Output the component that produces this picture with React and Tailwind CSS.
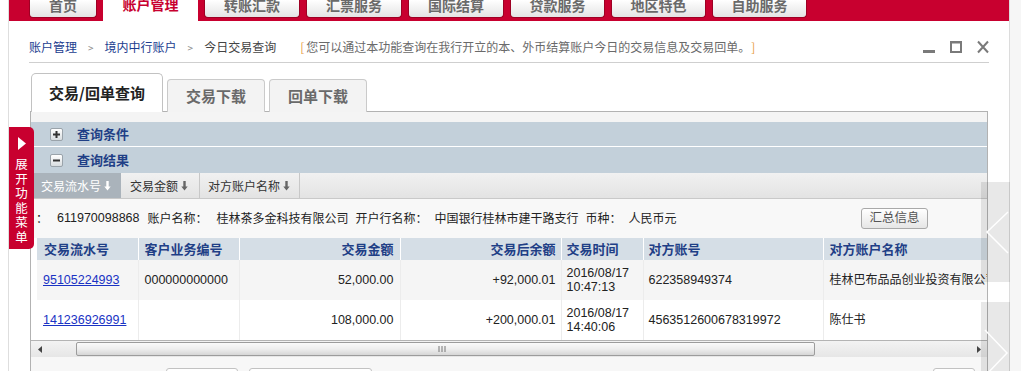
import React from "react";

const navTabs = [
  { label: "首页", w: "w-[68px]" },
  { label: "账户管理", w: "w-[95px]", active: true },
  { label: "转账汇款", w: "w-[96px]" },
  { label: "汇票服务", w: "w-[96px]" },
  { label: "国际结算", w: "w-[96px]" },
  { label: "贷款服务", w: "w-[95px]" },
  { label: "地区特色", w: "w-[95px]" },
  { label: "自助服务", w: "w-[95px]" },
];

const rows = [
  {
    id: "95105224993",
    biz: "000000000000",
    amount: "52,000.00",
    balance: "+92,000.01",
    date: "2016/08/17",
    time: "10:47:13",
    acct: "622358949374",
    name: "桂林巴布品品创业投资有限公司",
  },
  {
    id: "141236926991",
    biz: "",
    amount: "108,000.00",
    balance: "+200,000.01",
    date: "2016/08/17",
    time: "14:40:06",
    acct: "4563512600678319972",
    name: "陈仕书",
  },
];

const SortArrow = () => (
  <svg width="7" height="10" viewBox="0 0 7 10" className="ml-[3px]">
    <path d="M2.3 0h2.4v5.5h2L3.5 9.5 0.3 5.5h2z" fill="currentColor" />
  </svg>
);

const ToggleBox = ({ plus }) => (
  <div className="w-[13px] h-[13px] rounded-[2px] border border-[#9aa3aa] bg-linear-to-b from-white to-[#d8dde0] flex items-center justify-center">
    <svg width="9" height="9" viewBox="0 0 9 9">
      <rect x="1" y="3.5" width="7" height="2" fill="#333" />
      {plus && <rect x="3.5" y="1" width="2" height="7" fill="#333" />}
    </svg>
  </div>
);

const App = () => {
  return (
    <div className="relative w-[1021px] h-[371px] overflow-hidden bg-white flex font-['Liberation_Sans','Noto_Sans_CJK_SC',sans-serif]">
      <div className="w-[9px] shrink-0 border-r border-[#dedede]" />

      <div className="w-[1000px] shrink-0 flex flex-col">
        {/* top navigation */}
        <div className="h-[21px] bg-[#c8002f] flex items-start pl-[20px] gap-[6px]">
          {navTabs.map((t) =>
            t.active ? (
              <div
                key={t.label}
                className={`${t.w} h-[21px] bg-white flex justify-center text-[14px] leading-[14px] font-bold text-[#c8002f] font-['Noto_Sans_CJK_SC',sans-serif]`}
              >
                <span className="-mt-[3px]">{t.label}</span>
              </div>
            ) : (
              <div
                key={t.label}
                className={`${t.w} h-[18px] rounded-b-[4px] border border-t-0 border-[#9e0024] bg-linear-to-b from-white to-[#e4e4e4] flex justify-center text-[14px] leading-[14px] font-bold text-[#6a6a6a] font-['Noto_Sans_CJK_SC',sans-serif]`}
              >
                <span className="-mt-[2px]">{t.label}</span>
              </div>
            )
          )}
        </div>

        <div className="flex-1 px-[20px] flex flex-col">
          {/* breadcrumb */}
          <div className="mt-[16px] pb-[5px] border-b border-[#cfcfcf]">
            <div className="h-[20px] flex items-center text-[12px] font-['Noto_Sans_CJK_SC',sans-serif]">
              <span className="text-[#1b3d8f]">账户管理</span>
              <span className="mx-[11px] text-[#888] text-[10px]">&gt;</span>
              <span className="text-[#1b3d8f]">境内中行账户</span>
              <span className="mx-[11px] text-[#888] text-[10px]">&gt;</span>
              <span className="text-[#444]">今日交易查询</span>
              <span className="ml-[24px] text-[#e8a048]">[</span>
              <span className="ml-[2px] text-[#6a6a6a]">
                您可以通过本功能查询在我行开立的本、外币结算账户今日的交易信息及交易回单。
              </span>
              <span className="ml-[1px] text-[#e8a048]">]</span>
              <div className="ml-auto flex items-center">
                <svg width="12" height="14" viewBox="0 0 12 14">
                  <rect x="0" y="10" width="12" height="3" fill="#7a7a7a" />
                </svg>
                <svg width="12" height="14" viewBox="0 0 12 14" className="ml-[15px]">
                  <rect x="1" y="2" width="10" height="10" fill="none" stroke="#7a7a7a" strokeWidth="2" />
                  <rect x="0" y="1" width="12" height="2.5" fill="#7a7a7a" />
                </svg>
                <svg width="12" height="14" viewBox="0 0 12 14" className="ml-[15px]">
                  <path d="M1 1.5l10 11M11 1.5l-10 11" stroke="#7a7a7a" strokeWidth="2" />
                </svg>
              </div>
            </div>
          </div>

          {/* sub tabs */}
          <div className="relative z-10 mt-[10px] h-[39px] flex items-end gap-[4px] pl-[2px] font-['Noto_Sans_CJK_SC',sans-serif]">
            <div className="w-[132px] h-[39px] bg-white border border-b-0 border-[#c2c2c2] rounded-t-[5px] flex items-center justify-center text-[15px] font-bold text-[#222]">
              交易/回单查询
            </div>
            <div className="w-[98px] h-[33px] bg-[#f3f3f3] border border-b-0 border-[#cacaca] rounded-t-[4px] flex items-center justify-center text-[15px] font-bold text-[#6a6a6a]">
              交易下载
            </div>
            <div className="w-[98px] h-[33px] bg-[#f3f3f3] border border-b-0 border-[#cacaca] rounded-t-[4px] flex items-center justify-center text-[15px] font-bold text-[#6a6a6a]">
              回单下载
            </div>
          </div>

          {/* panel */}
          <div className="-mt-[1px] mx-[1px] flex-1 border border-b-0 border-[#b2b2b2] flex flex-col">
            <div className="h-[10px] bg-[#f4f4f4]" />
            <div className="h-[25px] bg-[#c3d0da] border-b border-white flex items-center pl-[19px]">
              <ToggleBox plus />
              <span className="ml-[14px] text-[13px] font-bold text-[#1f3f86] font-['Noto_Sans_CJK_SC',sans-serif]">查询条件</span>
            </div>
            <div className="h-[26px] bg-[#c3d0da] flex items-center pl-[19px]">
              <ToggleBox />
              <span className="ml-[14px] text-[13px] font-bold text-[#1f3f86] font-['Noto_Sans_CJK_SC',sans-serif]">查询结果</span>
            </div>

            {/* sort bar */}
            <div className="h-[26px] bg-linear-to-b from-[#f1f1f1] to-[#e3e3e3] border-b border-[#c9c9c9] flex items-stretch pl-[3px] text-[12px] font-['Noto_Sans_CJK_SC',sans-serif]">
              <div className="w-[87px] flex items-center pl-[7px] bg-[#aab3bb] text-white">
                交易流水号
                <SortArrow />
              </div>
              <div className="w-[79px] flex items-center pl-[9px] text-[#333] border-r border-[#c8c8c8]">
                交易金额
                <span className="text-[#666]"><SortArrow /></span>
              </div>
              <div className="w-[100px] flex items-center pl-[8px] text-[#333] border-r border-[#c8c8c8]">
                对方账户名称
                <span className="text-[#666]"><SortArrow /></span>
              </div>
            </div>

            {/* account info */}
            <div className="h-[39px] bg-[#f8f8f8] flex items-center pl-[5px] pr-[59px] text-[12px] text-[#222]">
              <span>：</span>
              <span className="ml-[9px] text-[12.5px]">611970098868</span>
              <span className="ml-[8px]">账户名称：</span>
              <span className="ml-[9px]">桂林茶多金科技有限公司</span>
              <span className="ml-[7px]">开户行名称：</span>
              <span className="ml-[7px]">中国银行桂林市建干路支行</span>
              <span className="ml-[7px]">币种：</span>
              <span className="ml-[7px]">人民币元</span>
              <button className="ml-auto w-[67px] h-[21px] rounded-[3px] border border-[#a9a9a9] bg-linear-to-b from-white to-[#e6e6e6] text-[12.5px] text-[#555]">
                汇总信息
              </button>
            </div>

            {/* table */}
            <div className="ml-[6px] overflow-hidden">
              <table className="table-fixed w-[986px] border-collapse">
                <colgroup>
                  <col className="w-[101px]" />
                  <col className="w-[101px]" />
                  <col className="w-[161px]" />
                  <col className="w-[161px]" />
                  <col className="w-[82px]" />
                  <col className="w-[180px]" />
                  <col className="w-[200px]" />
                </colgroup>
                <thead>
                  <tr className="h-[22px] bg-[#d5dee6] text-[13px] font-bold text-[#1f3f86] font-['Noto_Sans_CJK_SC',sans-serif]">
                    <th className="text-left pl-[7px] border-r border-white font-bold">交易流水号</th>
                    <th className="text-left pl-[6px] border-r border-white font-bold">客户业务编号</th>
                    <th className="text-right pr-[6px] border-r border-white font-bold">交易金额</th>
                    <th className="text-right pr-[5px] border-r border-white font-bold">交易后余额</th>
                    <th className="text-left pl-[5px] border-r border-white font-bold">交易时间</th>
                    <th className="text-left pl-[5px] border-r border-white font-bold">对方账号</th>
                    <th className="text-left pl-[6px] font-bold">对方账户名称</th>
                  </tr>
                </thead>
                <tbody>
                  {rows.map((r, i) => (
                    <tr
                      key={r.id}
                      className={`h-[40px] text-[12.5px] text-[#222] ${i === 0 ? "bg-[#f5f5f5]" : "bg-white"}`}
                    >
                      <td className="pl-[6px] border-r border-[#ececec]">
                        <span className="text-[#1a33c4] underline">{r.id}</span>
                      </td>
                      <td className="pl-[6px] border-r border-[#ececec]">{r.biz}</td>
                      <td className="text-right pr-[6px] border-r border-[#ececec]">{r.amount}</td>
                      <td className="text-right pr-[5px] border-r border-[#ececec]">{r.balance}</td>
                      <td className="pl-[5px] leading-[14px] border-r border-[#ececec]">
                        <div>{r.date}</div>
                        <div>{r.time}</div>
                      </td>
                      <td className="pl-[5px] border-r border-[#ececec]">{r.acct}</td>
                      <td className="pl-[6px] text-[12px] whitespace-nowrap overflow-hidden">{r.name}</td>
                    </tr>
                  ))}
                </tbody>
              </table>
            </div>

            {/* horizontal scrollbar */}
            <div className="h-[17px] border-t border-[#b4b4b4] bg-linear-to-b from-[#f3f3f3] to-[#e6e6e6] flex items-center">
              <svg width="4" height="7" viewBox="0 0 4 7" className="ml-[7px]">
                <path d="M4 0v7L0 3.5z" fill="#444" />
              </svg>
              <div className="ml-[34px] w-[739px] h-[14px] rounded-[2px] border border-[#9c9c9c] bg-linear-to-b from-[#fafafa] via-[#eeeeee] to-[#d6d6d6] flex items-center justify-center">
                <svg width="8" height="6" viewBox="0 0 8 6" className="-ml-[8px]">
                  <path d="M1 0v6M4 0v6M7 0v6" stroke="#777" strokeWidth="1" />
                </svg>
              </div>
              <svg width="4" height="7" viewBox="0 0 4 7" className="ml-auto mr-[6px]">
                <path d="M0 0v7L4 3.5z" fill="#444" />
              </svg>
            </div>

            {/* footer buttons */}
            <div className="flex-1 bg-[#f7f7f7] flex items-start pt-[11px]">
              <div className="ml-[135px] w-[72px] h-[24px] bg-white border border-[#c2c2c2] rounded-[3px]" />
              <div className="ml-[11px] w-[123px] h-[24px] bg-white border border-[#c2c2c2] rounded-[3px]" />
              <div className="ml-auto mr-[12px] w-[42px] h-[24px] bg-white border border-[#c2c2c2] rounded-[3px]" />
            </div>
          </div>
        </div>
      </div>

      <div className="flex-1 border-l border-[#dcdcdc] bg-[#f6f6f6]" />

      {/* side menu toggle */}
      <div className="absolute left-[9px] top-[127px] w-[25px] h-[122px] bg-[#c8002f] rounded-r-[5px] flex flex-col items-center pt-[10px]">
        <svg width="8" height="13" viewBox="0 0 8 13">
          <path d="M0 0l8 6.5L0 13z" fill="white" />
        </svg>
        <div className="mt-[7px] flex flex-col items-center text-[12.5px] leading-[14.6px] text-white font-['Noto_Sans_CJK_SC',sans-serif]">
          {"展开功能菜单".split("").map((c) => (
            <span key={c} className="block h-[14.6px]">{c}</span>
          ))}
        </div>
      </div>

      {/* carousel arrows */}
      <div className="absolute left-[981px] top-[182px] w-[29px] h-[100px] bg-black/[0.09]">
        <svg width="29" height="100" viewBox="0 0 29 100">
          <path d="M27 30L6 50l21 21" fill="none" stroke="white" strokeWidth="1.5" />
        </svg>
      </div>
      <div className="absolute left-[981px] top-[302px] w-[29px] h-[80px] bg-black/[0.09]">
        <svg width="29" height="80" viewBox="0 0 29 80">
          <path d="M4 28l22 23L4 74" fill="none" stroke="white" strokeWidth="1.5" />
        </svg>
      </div>
    </div>
  );
};

export default App;
